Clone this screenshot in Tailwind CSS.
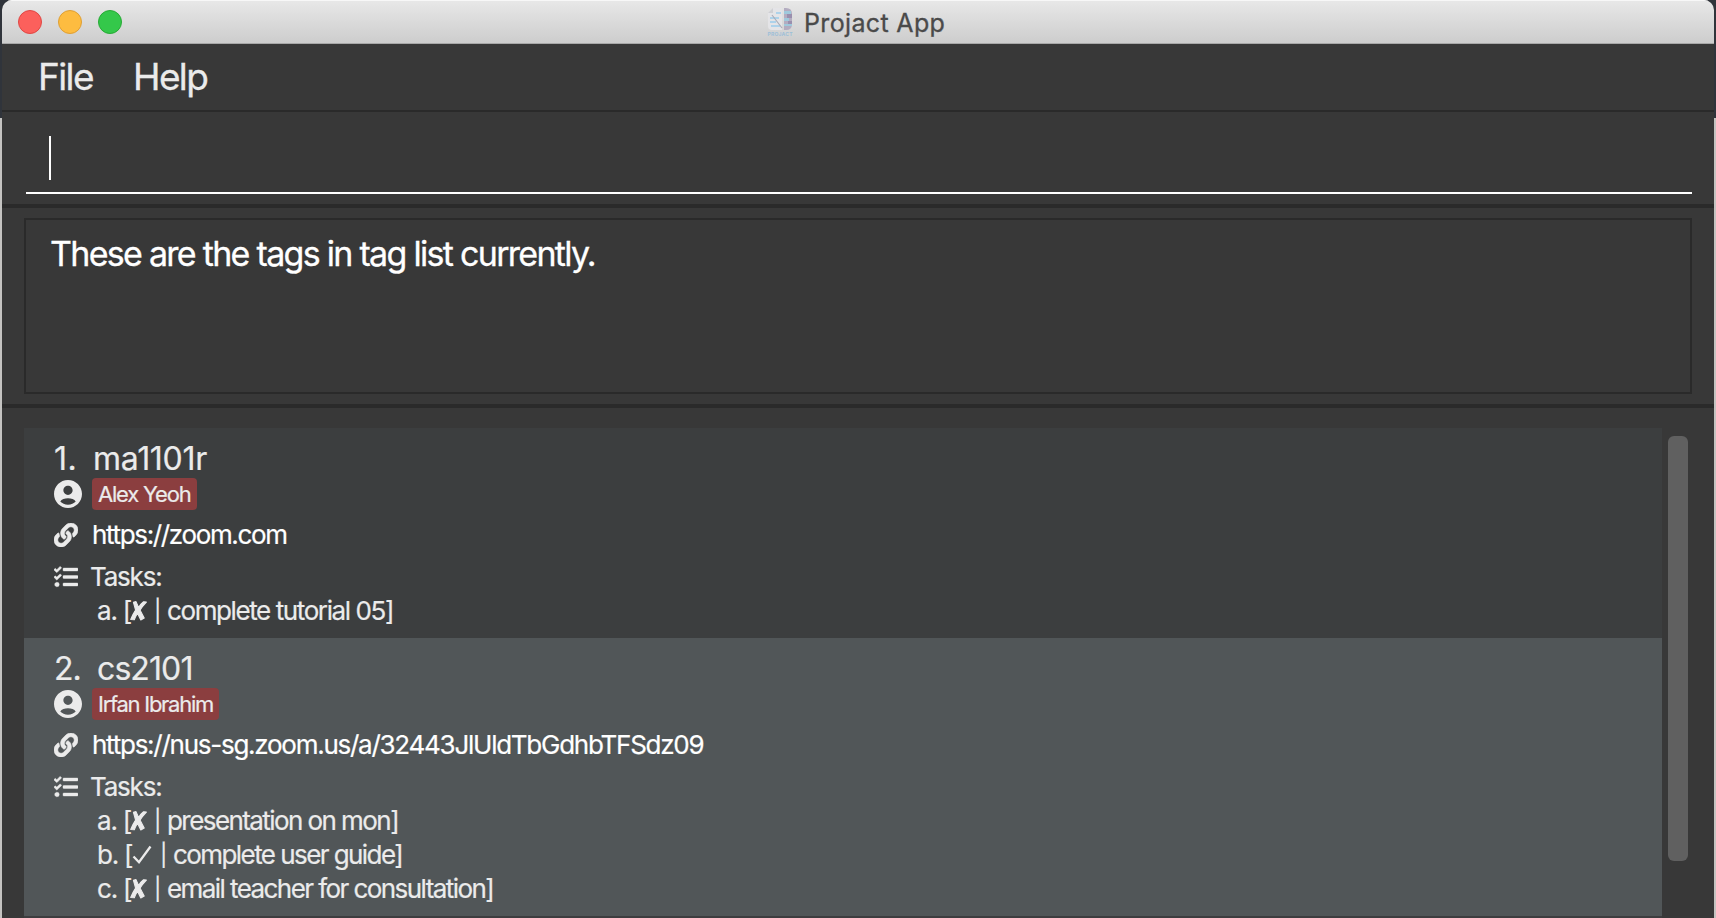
<!DOCTYPE html>
<html lang="en">
<head>
<meta charset="utf-8">
<title>Projact App</title>
<script src="https://cdn.jsdelivr.net/npm/@tailwindcss/browser@4"></script>
</head>
<body class="w-[1716px] h-[918px] overflow-hidden bg-[linear-gradient(#30343b_0_118px,#c4c3c1_118px)] font-['Inter',sans-serif] text-[#ebebeb]">
<svg class="hidden">
  <symbol id="user" viewBox="2 2 20 20"><path d="M12 2C6.480 2 2 6.480 2 12s4.480 10 10 10 10-4.480 10-10S17.520 2 12 2zm0 4.100c1.800 0 3.300 1.500 3.300 3.300s-1.500 3.300-3.300 3.300-3.300-1.500-3.300-3.300 1.500-3.300 3.300-3.300zm0 13.500c-2.300 0-4.200-.7-5.500-2.200.8-1.700 3.200-2.400 5.500-2.400s4.700.7 5.500 2.400c-1.300 1.500-3.200 2.200-5.500 2.200z"/></symbol>
  <symbol id="link" viewBox="0 0 512 512"><path d="M326.612 185.391c59.747 59.809 58.927 155.698.36 214.59-.11.12-.24.25-.36.37l-67.2 67.2c-59.27 59.27-155.699 59.262-214.96 0-59.27-59.26-59.27-155.7 0-214.96l37.106-37.106c9.84-9.84 26.786-3.3 27.294 10.606.648 17.722 3.826 35.527 9.69 52.721 1.986 5.822.567 12.262-3.783 16.612l-13.087 13.087c-28.026 28.026-28.905 73.66-1.155 101.96 28.024 28.579 74.086 28.749 102.325.51l67.2-67.19c28.191-28.191 28.073-73.757 0-101.83-3.701-3.694-7.429-6.564-10.341-8.569a16.037 16.037 0 0 1-6.947-12.606c-.396-10.567 3.348-21.456 11.698-29.806l21.054-21.055c5.521-5.521 14.182-6.199 20.584-1.731a152.482 152.482 0 0 1 20.522 17.197zM467.547 44.449c-59.261-59.262-155.69-59.27-214.96 0l-67.2 67.2c-.12.12-.25.25-.36.37-58.566 58.892-59.387 154.781.36 214.59a152.454 152.454 0 0 0 20.521 17.196c6.402 4.468 15.064 3.789 20.584-1.731l21.054-21.055c8.35-8.35 12.094-19.239 11.698-29.806a16.037 16.037 0 0 0-6.947-12.606c-2.912-2.005-6.64-4.875-10.341-8.569-28.073-28.073-28.191-73.639 0-101.83l67.2-67.19c28.239-28.239 74.3-28.069 102.325.51 27.75 28.3 26.872 73.934-1.155 101.96l-13.087 13.087c-4.35 4.35-5.769 10.79-3.783 16.612 5.864 17.194 9.042 34.999 9.69 52.721.509 13.906 17.454 20.446 27.294 10.606l37.106-37.106c59.271-59.259 59.271-155.699.001-214.959z" stroke="#ebebeb" stroke-width="12"/></symbol>
  <symbol id="tasks" viewBox="0 0 512 512"><path d="M139.61 35.5a12 12 0 0 0-17 0L58.93 98.81l-22.7-22.12a12 12 0 0 0-17 0L3.53 92.41a12 12 0 0 0 0 17l47.59 47.4a12.78 12.78 0 0 0 17.61 0l15.59-15.62L156.52 69a12.09 12.09 0 0 0 .09-17zm0 159.19a12 12 0 0 0-17 0l-63.68 63.72-22.7-22.1a12 12 0 0 0-17 0L3.53 252a12 12 0 0 0 0 17L51 316.5a12.77 12.77 0 0 0 17.6 0l15.7-15.69 72.2-72.22a12 12 0 0 0 .09-16.9zM64 368c-26.49 0-48.59 21.5-48.59 48S37.53 464 64 464a48 48 0 0 0 0-96zm432 16H208a16 16 0 0 0-16 16v32a16 16 0 0 0 16 16h288a16 16 0 0 0 16-16v-32a16 16 0 0 0-16-16zm0-320H208a16 16 0 0 0-16 16v32a16 16 0 0 0 16 16h288a16 16 0 0 0 16-16V80a16 16 0 0 0-16-16zm0 160H208a16 16 0 0 0-16 16v32a16 16 0 0 0 16 16h288a16 16 0 0 0 16-16v-32a16 16 0 0 0-16-16z" stroke="#ebebeb" stroke-width="8"/></symbol>
  <symbol id="cross" viewBox="0 0 17 20"><path d="M3.400 1.200 6 .6 8.600 6.500C10 4 12 2 13.600.8L16.400 1c-2.600 2.700-4.700 5.300-6.400 8.100l4.200 8-3.400 1.900-3.300-6.700c-1.500 2.500-2.500 4.500-3.200 6.500L.7 18.500c1.400-3.400 2.900-6.500 4.900-9.400z" stroke="currentColor" stroke-width="1.100" stroke-linejoin="round"/></symbol>
  <symbol id="check" viewBox="0 0 20 20"><path d="M1.500 11.500 7 17.300 18.500 1.500" fill="none" stroke="currentColor" stroke-width="2.300"/></symbol>
</svg>
<div class="mx-[2px] w-[1712px] h-[918px] flex flex-col bg-[#383838] rounded-t-[10px] overflow-hidden">
  <header class="h-[44px] shrink-0 flex items-center bg-linear-to-b from-[#e8e8e8] to-[#cdcdcd] border-b border-[#a8a8a8] pl-4 shadow-[inset_0_1px_0_#f7f7f7]">
    <div class="flex gap-4">
      <span class="size-6 rounded-full bg-[#fc605c] border border-[#df4744]"></span>
      <span class="size-6 rounded-full bg-[#fdbc40] border border-[#de9f34]"></span>
      <span class="size-6 rounded-full bg-[#34c84a] border border-[#27aa35]"></span>
    </div>
    <svg class="ml-[645px] mt-px w-[26px] h-[32px]" viewBox="0 0 26 32">
      <path d="M6 2h9v22H5q-4 0-4-4V7z" fill="#e4e4e7"/><path d="M1 7 6 2v5z" fill="#cfd0d4"/>
      <path d="M17 2h2q6 0 6 6v10q0 6-6 6h-2z" fill="#b3acc0"/><path d="M17 5h7v3h-7zM17 12h5v3h-5zM17 18h8v2h-8z" fill="#9fc9dc"/><path d="M20 8h5v4h-5zM21 15h4v3h-4z" fill="#9a8fae"/>
      <path d="M9 7h5M3 12h9M3 16h6M4 20h9" stroke="#9accec" stroke-width="1.500"/><path d="m5 9 10 13" stroke="#a9acb8" stroke-width="1.200"/>
      <text x="0.500" y="30" font-size="5" font-weight="700" textLength="25" fill="#9dbfd8">PROJACT</text>
    </svg>
    <h1 class="ml-[11px] mt-[2px] text-[25px] leading-[30px] tracking-[0.35px] text-[#4a4a4a] [-webkit-text-stroke:0.3px]">Projact App</h1>
  </header>
  <nav class="h-[68px] shrink-0 flex border-b-2 border-[#2a2a2a] pl-[36px] pt-[10px] text-[37px] leading-[46px] tracking-[-1.6px] [-webkit-text-stroke:0.3px]">
    <span class="w-[95px]">File</span><span>Help</span>
  </nav>
  <section class="h-[96px] shrink-0 border-b-4 border-[#2a2a2a] px-[22px]">
    <div class="h-[82px] ml-[2px] border-b-2 border-white pt-6 pl-[23px]"><div class="w-[2px] h-[44px] bg-white"></div></div>
  </section>
  <section class="h-[200px] shrink-0 border-b-4 border-[#2a2a2a] px-[22px] py-[10px]">
    <div class="h-[176px] border-2 border-[#2a2a2a] pl-[24px] pt-[11px] text-[34px] leading-[46px] tracking-[-1.71px] text-white [-webkit-text-stroke:0.3px]">These are the tags in tag list currently.</div>
  </section>
  <main class="flex grow pl-[22px] pt-5 whitespace-nowrap [-webkit-text-stroke:0.2px]">
    <div class="w-[1638px] h-[490px] bg-[#3d3d3f]">
      <article class="h-[210px] bg-[#3c3e3f] pl-[30px] pt-[12px]">
        <h2 class="flex h-[38px] text-[32px] leading-[38px] tracking-[-1px]"><span class="w-[39px] tracking-[0.5px]">1.</span><span class="tracking-[-0.3px]">ma1101r</span></h2>
        <div class="flex h-8"><svg class="w-7 h-7 mt-[2px] fill-[#ebebeb]"><use href="#user"/></svg><span class="ml-[10px] h-8 rounded bg-[#8b3e3f] px-[6px] text-[22px] leading-[32px] tracking-[-1.2px]">Alex Yeoh</span></div>
        <div class="flex h-[42px] items-center pt-[7px]"><svg class="size-6 fill-[#ebebeb]"><use href="#link"/></svg><span class="ml-[14px] text-[26px] leading-[34px] tracking-[-1.35px] text-white">https://zoom.com</span></div>
        <div class="flex h-[34px] items-center mt-2"><svg class="size-6 fill-[#ebebeb]"><use href="#tasks"/></svg><span class="ml-[12px] text-[26px] leading-[34px] tracking-[-1.2px]">Tasks:</span></div>
        <div class="pl-[43px] text-[26px] leading-[34px] tracking-[-1.55px]">
          <div class="flex items-center"><span class="w-[33px] tracking-[-1.2px]">a. [</span><svg class="w-[17px] h-5 fill-current"><use href="#cross"/></svg><span class="ml-[7px] w-[13px] text-[22px]">|</span><span class="tracking-[-1.4px]">complete tutorial 05]</span></div>
        </div>
      </article>
      <article class="h-[278px] bg-[#515658] pl-[30px] pt-[12px]">
        <h2 class="flex h-[38px] text-[32px] leading-[38px] tracking-[-1px]"><span class="w-[43px]">2.</span><span class="tracking-[-0.9px]">cs2101</span></h2>
        <div class="flex h-8"><svg class="w-7 h-7 mt-[2px] fill-[#ebebeb]"><use href="#user"/></svg><span class="ml-[10px] h-8 rounded bg-[#8b3e3f] px-[6px] text-[22px] leading-[32px] tracking-[-1.27px]">Irfan Ibrahim</span></div>
        <div class="flex h-[42px] items-center pt-[7px]"><svg class="size-6 fill-[#ebebeb]"><use href="#link"/></svg><span class="ml-[14px] text-[26px] leading-[34px] tracking-[-1.26px] text-white">https://nus-sg.zoom.us/a/32443JlUldTbGdhbTFSdz09</span></div>
        <div class="flex h-[34px] items-center mt-2"><svg class="size-6 fill-[#ebebeb]"><use href="#tasks"/></svg><span class="ml-[12px] text-[26px] leading-[34px] tracking-[-1.2px]">Tasks:</span></div>
        <div class="pl-[43px] text-[26px] leading-[34px] tracking-[-1.57px]">
          <div class="flex items-center"><span class="w-[33px] tracking-[-1.2px]">a. [</span><svg class="w-[17px] h-5 fill-current"><use href="#cross"/></svg><span class="ml-[7px] w-[13px] text-[22px]">|</span><span>presentation on mon]</span></div>
          <div class="flex items-center"><span class="w-[35px] tracking-[-1.2px]">b. [</span><svg class="w-5 h-5"><use href="#check"/></svg><span class="ml-[8px] w-[13px] text-[22px]">|</span><span>complete user guide]</span></div>
          <div class="flex items-center"><span class="w-[33px] tracking-[-1.2px]">c. [</span><svg class="w-[17px] h-5 fill-current"><use href="#cross"/></svg><span class="ml-[7px] w-[13px] text-[22px]">|</span><span>email teacher for consultation]</span></div>
        </div>
      </article>
    </div>
    <div class="ml-[6px] mt-2 w-5 h-[425px] rounded-[6px] bg-[#606060]"></div>
  </main>
</div>
</body>
</html>
